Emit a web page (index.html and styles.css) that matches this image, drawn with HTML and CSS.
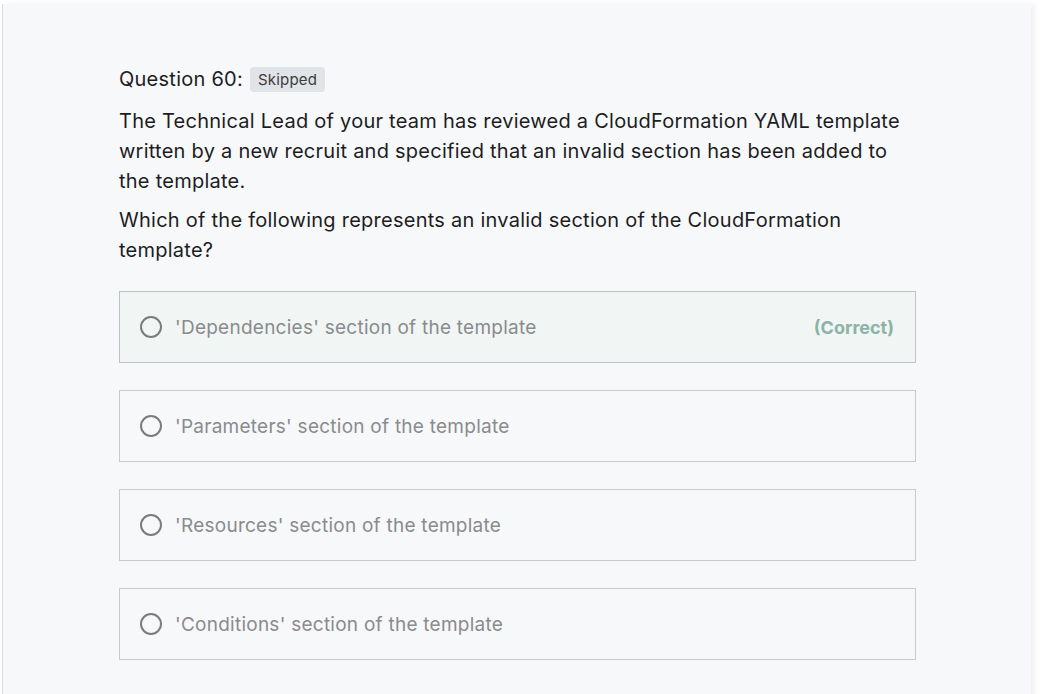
FILE: index.html
```html
<!DOCTYPE html>
<html lang="en">
<head>
<meta charset="utf-8">
<title>Question 60</title>
<link rel="stylesheet" href="styles.css">
</head>
<body>
<main class="panel">
  <div class="question">
    <h2 class="q-title">Question 60: <span class="badge">Skipped</span></h2>
    <p class="q-text">The Technical Lead of your team has reviewed a CloudFormation YAML template written by a new recruit and specified that an invalid section has been added to the template.</p>
    <p class="q-text">Which of the following represents an invalid section of the CloudFormation template?</p>
  </div>
  <ul class="options">
    <li class="option correct">
      <span class="radio"></span>
      <span class="opt-text">'Dependencies' section of the template</span>
      <span class="tag">(Correct)</span>
    </li>
    <li class="option">
      <span class="radio"></span>
      <span class="opt-text">'Parameters' section of the template</span>
    </li>
    <li class="option">
      <span class="radio"></span>
      <span class="opt-text">'Resources' section of the template</span>
    </li>
    <li class="option">
      <span class="radio"></span>
      <span class="opt-text">'Conditions' section of the template</span>
    </li>
  </ul>
</main>
</body>
</html>
```

FILE: styles.css
```css
html, body {
  margin: 0;
  padding: 0;
  background: #ffffff;
  height: 100%;
  overflow: hidden;
}
body {
  font-family: Inter, "Noto Sans", "Liberation Sans", sans-serif;
  color: #1d1d1f;
}
.panel {
  margin: 4px 0 0 2px;
  width: 1029px;
  min-height: 700px;
  box-sizing: border-box;
  background: #f7f8fa;
  border-left: 1px solid #dcdcdc;
  box-shadow: 4px 0 6px rgba(0,0,0,0.06);
  padding: 60px 0 0 116px;
}
.question {
  width: 790px;
}
.q-title {
  margin: 0 0 12px;
  font-size: 20px;
  font-weight: 400;
  line-height: 30px;
  letter-spacing: 0.25px;
  display: flex;
  align-items: center;
  gap: 7px;
}
.badge {
  font-size: 15px;
  line-height: 25px;
  padding: 0 8px;
  letter-spacing: 0.2px;
  background: #e0e3e7;
  border-radius: 4px;
  color: #3c3c3c;
}
.q-text {
  margin: 0 0 9px;
  font-size: 20px;
  line-height: 30px;
  letter-spacing: 0.25px;
}
.options {
  list-style: none;
  margin: 26px 0 0;
  padding: 0;
  width: 797px;
  display: flex;
  flex-direction: column;
  gap: 27px;
}
.option {
  height: 72px;
  box-sizing: border-box;
  border: 1px solid #c9cacc;
  display: flex;
  align-items: center;
  padding: 0 21px 0 20px;
  gap: 13px;
  font-size: 19px;
  letter-spacing: 0.25px;
  color: #8a8b8d;
}
.option.correct {
  background: #f1f5f4;
  border-color: #bfc4c3;
}
.radio {
  width: 22px;
  height: 22px;
  box-sizing: border-box;
  border: 2px solid #7b7c7e;
  border-radius: 50%;
  flex: none;
}
.opt-text {
  flex: 1;
}
.tag {
  font-size: 18px;
  letter-spacing: 0;
  font-weight: 700;
  color: #8cb3a6;
}
```
